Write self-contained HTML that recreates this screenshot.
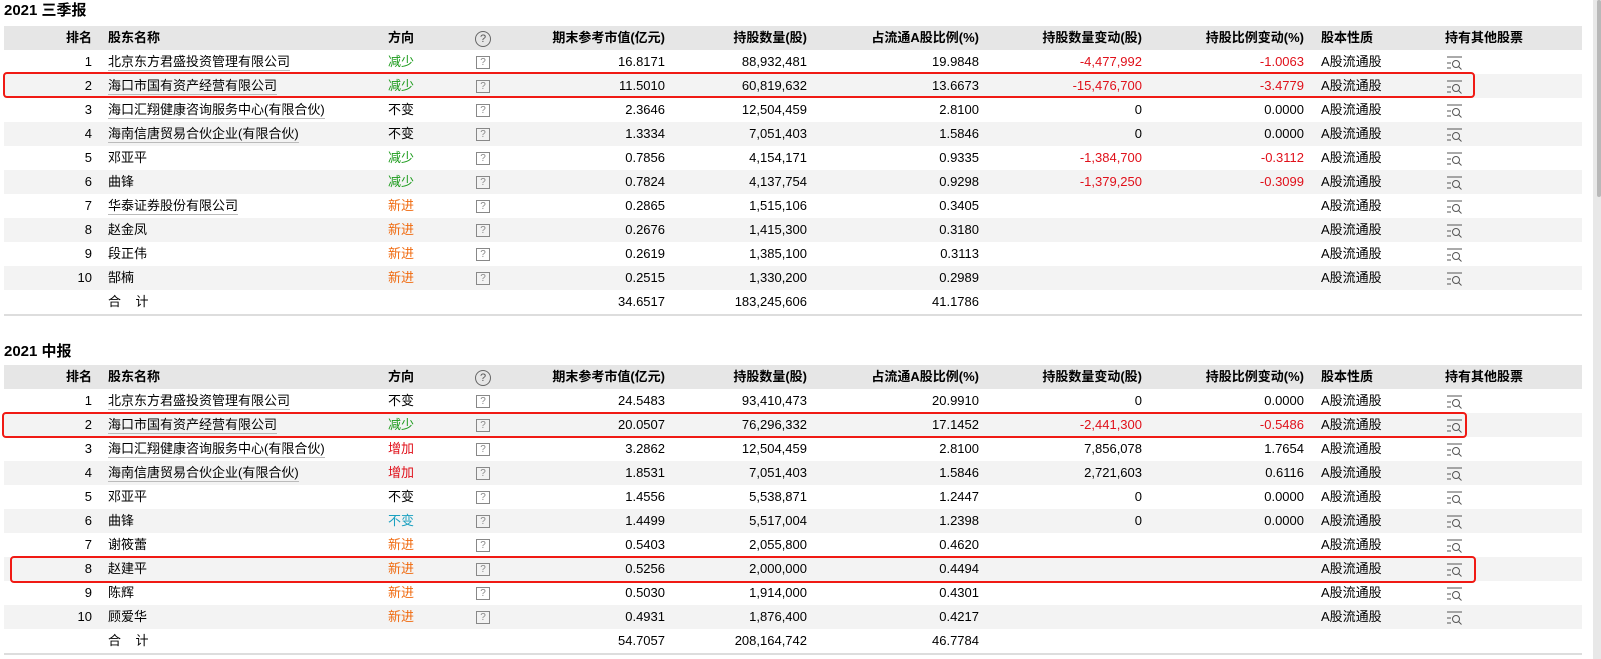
<!DOCTYPE html>
<html><head><meta charset="utf-8">
<style>
*{margin:0;padding:0;box-sizing:border-box}
body{width:1601px;height:659px;background:#fff;font-family:"Liberation Sans","Noto Sans CJK SC",sans-serif;font-size:13px;color:#000;position:relative;overflow:hidden}
.title{position:absolute;left:4px;font-weight:bold;font-size:15px;line-height:20px}
table{position:absolute;left:4px;border-collapse:collapse;table-layout:fixed;width:1578px}
td,th{height:24px;line-height:24px;white-space:nowrap;overflow:hidden;font-weight:normal;padding:0}
th{background:#e6e6e6;font-weight:bold}
tr.g td{background:#f3f3f3}
tr.tot td{border-bottom:2px solid #ddd}
.r{text-align:right;padding-right:6px}
.l1{text-align:left;padding-left:10px}
.l2{text-align:left;padding-left:8px}
.l3{text-align:left;padding-left:11px}
.l4{text-align:left;padding-left:9px}
.c{text-align:center}
.nm{border-bottom:1px solid #bbb;padding-bottom:1px}
.dn{color:#1a9a1a}.nw{color:#f06a0f}.up{color:#e0101a}.bl{color:#1aa0c0}.neg{color:#e0101a}
.q{display:inline-block;width:14px;height:13px;border:1px solid #888;color:#888;font-size:10px;line-height:11px;text-align:center;vertical-align:middle}
.qc{display:inline-block;width:16px;height:16px;border:1px solid #666;border-radius:50%;color:#555;font-size:11px;line-height:14px;text-align:center;vertical-align:middle;font-weight:normal}
svg{vertical-align:middle}
.box{position:absolute;border:2.5px solid #f01a14;border-radius:4px}
.sb{position:absolute;left:1593px;top:0;width:8px;height:659px;background:#e8e8e8}
.th{position:absolute;left:1597px;top:0;width:4px;height:197px;background:#b8b8b8;border-radius:2px}
</style></head><body>
<div class="title" style="top:1px">2021 三季报</div>
<table style="top:26px">
<colgroup><col style="width:94px"><col style="width:282px"><col style="width:70px"><col style="width:66px"><col style="width:155px"><col style="width:142px"><col style="width:172px"><col style="width:163px"><col style="width:162px"><col style="width:126px"><col style="width:146px"></colgroup>
<tr><th class="r">排名</th><th class="l1">股东名称</th><th class="l2">方向</th><th class="c"><span class="qc">?</span></th><th class="r">期末参考市值(亿元)</th><th class="r">持股数量(股)</th><th class="r">占流通A股比例(%)</th><th class="r">持股数量变动(股)</th><th class="r">持股比例变动(%)</th><th class="l3">股本性质</th><th class="l4">持有其他股票</th></tr>
<tr><td class="r">1</td><td class="l1"><span class="nm">北京东方君盛投资管理有限公司</span></td><td class="l2 dn">减少</td><td class="c"><span class="q">?</span></td><td class="r">16.8171</td><td class="r">88,932,481</td><td class="r">19.9848</td><td class="r neg">-4,477,992</td><td class="r neg">-1.0063</td><td class="l3">A股流通股</td><td class="l4"><svg width="18" height="14"><path d="M2 1h15M2 7h4M2 12h4" stroke="#555" fill="none"/><circle cx="11" cy="8" r="3.5" stroke="#555" fill="none"/><path d="M13.5 10.5l3 3" stroke="#555"/></svg></td></tr>
<tr class="g"><td class="r">2</td><td class="l1"><span class="nm">海口市国有资产经营有限公司</span></td><td class="l2 dn">减少</td><td class="c"><span class="q">?</span></td><td class="r">11.5010</td><td class="r">60,819,632</td><td class="r">13.6673</td><td class="r neg">-15,476,700</td><td class="r neg">-3.4779</td><td class="l3">A股流通股</td><td class="l4"><svg width="18" height="14"><path d="M2 1h15M2 7h4M2 12h4" stroke="#555" fill="none"/><circle cx="11" cy="8" r="3.5" stroke="#555" fill="none"/><path d="M13.5 10.5l3 3" stroke="#555"/></svg></td></tr>
<tr><td class="r">3</td><td class="l1"><span class="nm">海口汇翔健康咨询服务中心(有限合伙)</span></td><td class="l2">不变</td><td class="c"><span class="q">?</span></td><td class="r">2.3646</td><td class="r">12,504,459</td><td class="r">2.8100</td><td class="r">0</td><td class="r">0.0000</td><td class="l3">A股流通股</td><td class="l4"><svg width="18" height="14"><path d="M2 1h15M2 7h4M2 12h4" stroke="#555" fill="none"/><circle cx="11" cy="8" r="3.5" stroke="#555" fill="none"/><path d="M13.5 10.5l3 3" stroke="#555"/></svg></td></tr>
<tr class="g"><td class="r">4</td><td class="l1"><span class="nm">海南信唐贸易合伙企业(有限合伙)</span></td><td class="l2">不变</td><td class="c"><span class="q">?</span></td><td class="r">1.3334</td><td class="r">7,051,403</td><td class="r">1.5846</td><td class="r">0</td><td class="r">0.0000</td><td class="l3">A股流通股</td><td class="l4"><svg width="18" height="14"><path d="M2 1h15M2 7h4M2 12h4" stroke="#555" fill="none"/><circle cx="11" cy="8" r="3.5" stroke="#555" fill="none"/><path d="M13.5 10.5l3 3" stroke="#555"/></svg></td></tr>
<tr><td class="r">5</td><td class="l1">邓亚平</td><td class="l2 dn">减少</td><td class="c"><span class="q">?</span></td><td class="r">0.7856</td><td class="r">4,154,171</td><td class="r">0.9335</td><td class="r neg">-1,384,700</td><td class="r neg">-0.3112</td><td class="l3">A股流通股</td><td class="l4"><svg width="18" height="14"><path d="M2 1h15M2 7h4M2 12h4" stroke="#555" fill="none"/><circle cx="11" cy="8" r="3.5" stroke="#555" fill="none"/><path d="M13.5 10.5l3 3" stroke="#555"/></svg></td></tr>
<tr class="g"><td class="r">6</td><td class="l1">曲锋</td><td class="l2 dn">减少</td><td class="c"><span class="q">?</span></td><td class="r">0.7824</td><td class="r">4,137,754</td><td class="r">0.9298</td><td class="r neg">-1,379,250</td><td class="r neg">-0.3099</td><td class="l3">A股流通股</td><td class="l4"><svg width="18" height="14"><path d="M2 1h15M2 7h4M2 12h4" stroke="#555" fill="none"/><circle cx="11" cy="8" r="3.5" stroke="#555" fill="none"/><path d="M13.5 10.5l3 3" stroke="#555"/></svg></td></tr>
<tr><td class="r">7</td><td class="l1"><span class="nm">华泰证券股份有限公司</span></td><td class="l2 nw">新进</td><td class="c"><span class="q">?</span></td><td class="r">0.2865</td><td class="r">1,515,106</td><td class="r">0.3405</td><td></td><td></td><td class="l3">A股流通股</td><td class="l4"><svg width="18" height="14"><path d="M2 1h15M2 7h4M2 12h4" stroke="#555" fill="none"/><circle cx="11" cy="8" r="3.5" stroke="#555" fill="none"/><path d="M13.5 10.5l3 3" stroke="#555"/></svg></td></tr>
<tr class="g"><td class="r">8</td><td class="l1">赵金凤</td><td class="l2 nw">新进</td><td class="c"><span class="q">?</span></td><td class="r">0.2676</td><td class="r">1,415,300</td><td class="r">0.3180</td><td></td><td></td><td class="l3">A股流通股</td><td class="l4"><svg width="18" height="14"><path d="M2 1h15M2 7h4M2 12h4" stroke="#555" fill="none"/><circle cx="11" cy="8" r="3.5" stroke="#555" fill="none"/><path d="M13.5 10.5l3 3" stroke="#555"/></svg></td></tr>
<tr><td class="r">9</td><td class="l1">段正伟</td><td class="l2 nw">新进</td><td class="c"><span class="q">?</span></td><td class="r">0.2619</td><td class="r">1,385,100</td><td class="r">0.3113</td><td></td><td></td><td class="l3">A股流通股</td><td class="l4"><svg width="18" height="14"><path d="M2 1h15M2 7h4M2 12h4" stroke="#555" fill="none"/><circle cx="11" cy="8" r="3.5" stroke="#555" fill="none"/><path d="M13.5 10.5l3 3" stroke="#555"/></svg></td></tr>
<tr class="g"><td class="r">10</td><td class="l1">郜楠</td><td class="l2 nw">新进</td><td class="c"><span class="q">?</span></td><td class="r">0.2515</td><td class="r">1,330,200</td><td class="r">0.2989</td><td></td><td></td><td class="l3">A股流通股</td><td class="l4"><svg width="18" height="14"><path d="M2 1h15M2 7h4M2 12h4" stroke="#555" fill="none"/><circle cx="11" cy="8" r="3.5" stroke="#555" fill="none"/><path d="M13.5 10.5l3 3" stroke="#555"/></svg></td></tr>
<tr class="tot"><td></td><td class="l1">合&nbsp;&nbsp;&nbsp;&nbsp;计</td><td></td><td></td><td class="r">34.6517</td><td class="r">183,245,606</td><td class="r">41.1786</td><td></td><td></td><td></td><td></td></tr>
</table>

<div class="title" style="top:342px">2021 中报</div>
<table style="top:365px">
<colgroup><col style="width:94px"><col style="width:282px"><col style="width:70px"><col style="width:66px"><col style="width:155px"><col style="width:142px"><col style="width:172px"><col style="width:163px"><col style="width:162px"><col style="width:126px"><col style="width:146px"></colgroup>
<tr><th class="r">排名</th><th class="l1">股东名称</th><th class="l2">方向</th><th class="c"><span class="qc">?</span></th><th class="r">期末参考市值(亿元)</th><th class="r">持股数量(股)</th><th class="r">占流通A股比例(%)</th><th class="r">持股数量变动(股)</th><th class="r">持股比例变动(%)</th><th class="l3">股本性质</th><th class="l4">持有其他股票</th></tr>
<tr><td class="r">1</td><td class="l1"><span class="nm">北京东方君盛投资管理有限公司</span></td><td class="l2">不变</td><td class="c"><span class="q">?</span></td><td class="r">24.5483</td><td class="r">93,410,473</td><td class="r">20.9910</td><td class="r">0</td><td class="r">0.0000</td><td class="l3">A股流通股</td><td class="l4"><svg width="18" height="14"><path d="M2 1h15M2 7h4M2 12h4" stroke="#555" fill="none"/><circle cx="11" cy="8" r="3.5" stroke="#555" fill="none"/><path d="M13.5 10.5l3 3" stroke="#555"/></svg></td></tr>
<tr class="g"><td class="r">2</td><td class="l1"><span class="nm">海口市国有资产经营有限公司</span></td><td class="l2 dn">减少</td><td class="c"><span class="q">?</span></td><td class="r">20.0507</td><td class="r">76,296,332</td><td class="r">17.1452</td><td class="r neg">-2,441,300</td><td class="r neg">-0.5486</td><td class="l3">A股流通股</td><td class="l4"><svg width="18" height="14"><path d="M2 1h15M2 7h4M2 12h4" stroke="#555" fill="none"/><circle cx="11" cy="8" r="3.5" stroke="#555" fill="none"/><path d="M13.5 10.5l3 3" stroke="#555"/></svg></td></tr>
<tr><td class="r">3</td><td class="l1"><span class="nm">海口汇翔健康咨询服务中心(有限合伙)</span></td><td class="l2 up">增加</td><td class="c"><span class="q">?</span></td><td class="r">3.2862</td><td class="r">12,504,459</td><td class="r">2.8100</td><td class="r">7,856,078</td><td class="r">1.7654</td><td class="l3">A股流通股</td><td class="l4"><svg width="18" height="14"><path d="M2 1h15M2 7h4M2 12h4" stroke="#555" fill="none"/><circle cx="11" cy="8" r="3.5" stroke="#555" fill="none"/><path d="M13.5 10.5l3 3" stroke="#555"/></svg></td></tr>
<tr class="g"><td class="r">4</td><td class="l1"><span class="nm">海南信唐贸易合伙企业(有限合伙)</span></td><td class="l2 up">增加</td><td class="c"><span class="q">?</span></td><td class="r">1.8531</td><td class="r">7,051,403</td><td class="r">1.5846</td><td class="r">2,721,603</td><td class="r">0.6116</td><td class="l3">A股流通股</td><td class="l4"><svg width="18" height="14"><path d="M2 1h15M2 7h4M2 12h4" stroke="#555" fill="none"/><circle cx="11" cy="8" r="3.5" stroke="#555" fill="none"/><path d="M13.5 10.5l3 3" stroke="#555"/></svg></td></tr>
<tr><td class="r">5</td><td class="l1">邓亚平</td><td class="l2">不变</td><td class="c"><span class="q">?</span></td><td class="r">1.4556</td><td class="r">5,538,871</td><td class="r">1.2447</td><td class="r">0</td><td class="r">0.0000</td><td class="l3">A股流通股</td><td class="l4"><svg width="18" height="14"><path d="M2 1h15M2 7h4M2 12h4" stroke="#555" fill="none"/><circle cx="11" cy="8" r="3.5" stroke="#555" fill="none"/><path d="M13.5 10.5l3 3" stroke="#555"/></svg></td></tr>
<tr class="g"><td class="r">6</td><td class="l1">曲锋</td><td class="l2 bl">不变</td><td class="c"><span class="q">?</span></td><td class="r">1.4499</td><td class="r">5,517,004</td><td class="r">1.2398</td><td class="r">0</td><td class="r">0.0000</td><td class="l3">A股流通股</td><td class="l4"><svg width="18" height="14"><path d="M2 1h15M2 7h4M2 12h4" stroke="#555" fill="none"/><circle cx="11" cy="8" r="3.5" stroke="#555" fill="none"/><path d="M13.5 10.5l3 3" stroke="#555"/></svg></td></tr>
<tr><td class="r">7</td><td class="l1">谢筱蕾</td><td class="l2 nw">新进</td><td class="c"><span class="q">?</span></td><td class="r">0.5403</td><td class="r">2,055,800</td><td class="r">0.4620</td><td></td><td></td><td class="l3">A股流通股</td><td class="l4"><svg width="18" height="14"><path d="M2 1h15M2 7h4M2 12h4" stroke="#555" fill="none"/><circle cx="11" cy="8" r="3.5" stroke="#555" fill="none"/><path d="M13.5 10.5l3 3" stroke="#555"/></svg></td></tr>
<tr class="g"><td class="r">8</td><td class="l1">赵建平</td><td class="l2 nw">新进</td><td class="c"><span class="q">?</span></td><td class="r">0.5256</td><td class="r">2,000,000</td><td class="r">0.4494</td><td></td><td></td><td class="l3">A股流通股</td><td class="l4"><svg width="18" height="14"><path d="M2 1h15M2 7h4M2 12h4" stroke="#555" fill="none"/><circle cx="11" cy="8" r="3.5" stroke="#555" fill="none"/><path d="M13.5 10.5l3 3" stroke="#555"/></svg></td></tr>
<tr><td class="r">9</td><td class="l1">陈辉</td><td class="l2 nw">新进</td><td class="c"><span class="q">?</span></td><td class="r">0.5030</td><td class="r">1,914,000</td><td class="r">0.4301</td><td></td><td></td><td class="l3">A股流通股</td><td class="l4"><svg width="18" height="14"><path d="M2 1h15M2 7h4M2 12h4" stroke="#555" fill="none"/><circle cx="11" cy="8" r="3.5" stroke="#555" fill="none"/><path d="M13.5 10.5l3 3" stroke="#555"/></svg></td></tr>
<tr class="g"><td class="r">10</td><td class="l1">顾爱华</td><td class="l2 nw">新进</td><td class="c"><span class="q">?</span></td><td class="r">0.4931</td><td class="r">1,876,400</td><td class="r">0.4217</td><td></td><td></td><td class="l3">A股流通股</td><td class="l4"><svg width="18" height="14"><path d="M2 1h15M2 7h4M2 12h4" stroke="#555" fill="none"/><circle cx="11" cy="8" r="3.5" stroke="#555" fill="none"/><path d="M13.5 10.5l3 3" stroke="#555"/></svg></td></tr>
<tr class="tot"><td></td><td class="l1">合&nbsp;&nbsp;&nbsp;&nbsp;计</td><td></td><td></td><td class="r">54.7057</td><td class="r">208,164,742</td><td class="r">46.7784</td><td></td><td></td><td></td><td></td></tr>
</table>

<div class="box" style="left:3px;top:72px;width:1472px;height:26px"></div>
<div class="box" style="left:2px;top:412px;width:1465px;height:26px"></div>
<div class="box" style="left:10px;top:556px;width:1466px;height:27px"></div>
<div class="sb"></div><div class="th"></div>
</body></html>
